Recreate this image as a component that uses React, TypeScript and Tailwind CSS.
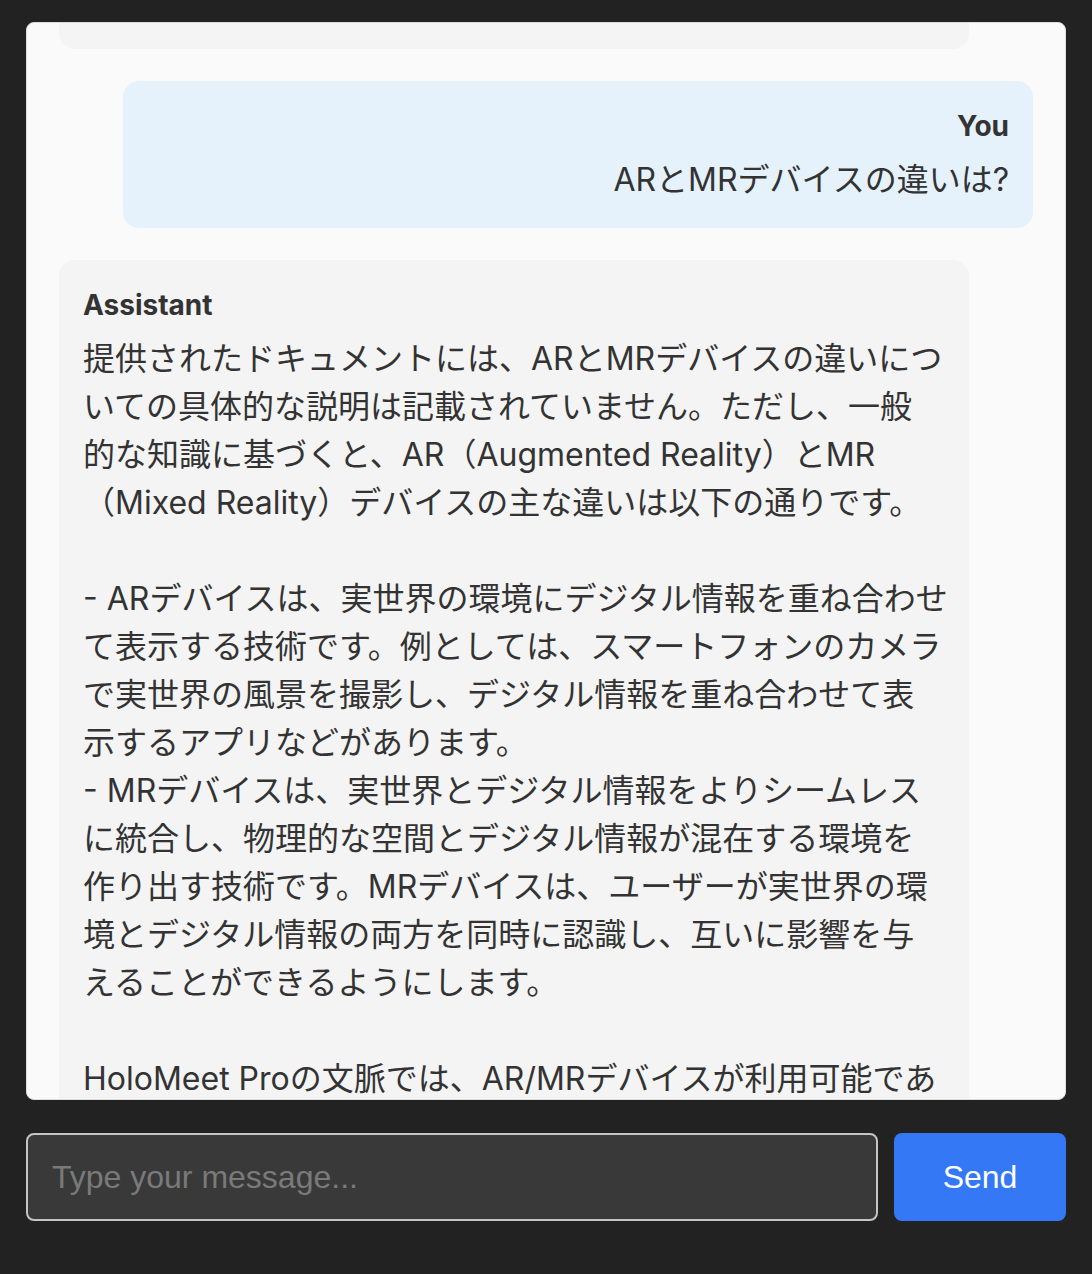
import React from "react";

const userText = "ARとMRデバイスの違いは?";

const assistantLines: string[] = [
  "提供されたドキュメントには、ARとMRデバイスの違いにつ",
  "いての具体的な説明は記載されていません。ただし、一般",
  "的な知識に基づくと、AR（Augmented Reality）とMR",
  "（Mixed Reality）デバイスの主な違いは以下の通りです。",
  "",
  "- ARデバイスは、実世界の環境にデジタル情報を重ね合わせ",
  "て表示する技術です。例としては、スマートフォンのカメラ",
  "で実世界の風景を撮影し、デジタル情報を重ね合わせて表",
  "示するアプリなどがあります。",
  "- MRデバイスは、実世界とデジタル情報をよりシームレス",
  "に統合し、物理的な空間とデジタル情報が混在する環境を",
  "作り出す技術です。MRデバイスは、ユーザーが実世界の環",
  "境とデジタル情報の両方を同時に認識し、互いに影響を与",
  "えることができるようにします。",
  "",
  "HoloMeet Proの文脈では、AR/MRデバイスが利用可能であ",
];

const bodyFont = {
  fontFamily: 'Inter, "Noto Sans CJK JP", sans-serif',
};

export default function App() {
  return (
    <div className="h-[1274px] w-full bg-[#222222] flex flex-col px-[26px] pt-[22px] pb-[53px]">
      <div
        className="flex-1 min-h-0 bg-[#fafafa] border border-[#dddddd] rounded-[8px] overflow-hidden"
        style={bodyFont}
      >
        <div className="px-[32px] flex flex-col gap-[32px]">
          <div className="h-[26px] mr-[64px] bg-[#f4f4f4] rounded-b-[16px]" />

          <div className="ml-[64px] bg-[#e5f2fc] rounded-[16px] p-[24px] text-right text-[#333333]">
            <div className="text-[28px] leading-[42px] font-bold mb-[9px]">You</div>
            <div className="text-[32px] leading-[48px]">{userText}</div>
          </div>

          <div className="mr-[64px] bg-[#f4f4f4] rounded-[16px] p-[24px] text-[#333333]">
            <div className="text-[28px] leading-[42px] font-bold mb-[9px]">Assistant</div>
            <div className="text-[32px] leading-[48px]">
              {assistantLines.map((line, i) => (
                <div key={i} className="whitespace-nowrap h-[48px]">
                  {line}
                </div>
              ))}
            </div>
          </div>
        </div>
      </div>

      <div className="mt-[33px] flex gap-[16px] h-[88px]">
        <input
          type="text"
          placeholder="Type your message..."
          className="flex-1 min-w-0 h-full bg-[#393939] border-2 border-[#c4c4c4] rounded-[8px] pl-[24px] pr-[24px] text-[32px] text-white placeholder:text-[#7a7a7a] outline-none"
          style={{ fontFamily: '"Liberation Sans", Arial, sans-serif' }}
        />
        <button
          type="button"
          className="w-[172px] h-full bg-[#3478f6] rounded-[8px] text-white text-[32px]"
          style={{ fontFamily: '"Liberation Sans", Arial, sans-serif' }}
        >
          Send
        </button>
      </div>
    </div>
  );
}
